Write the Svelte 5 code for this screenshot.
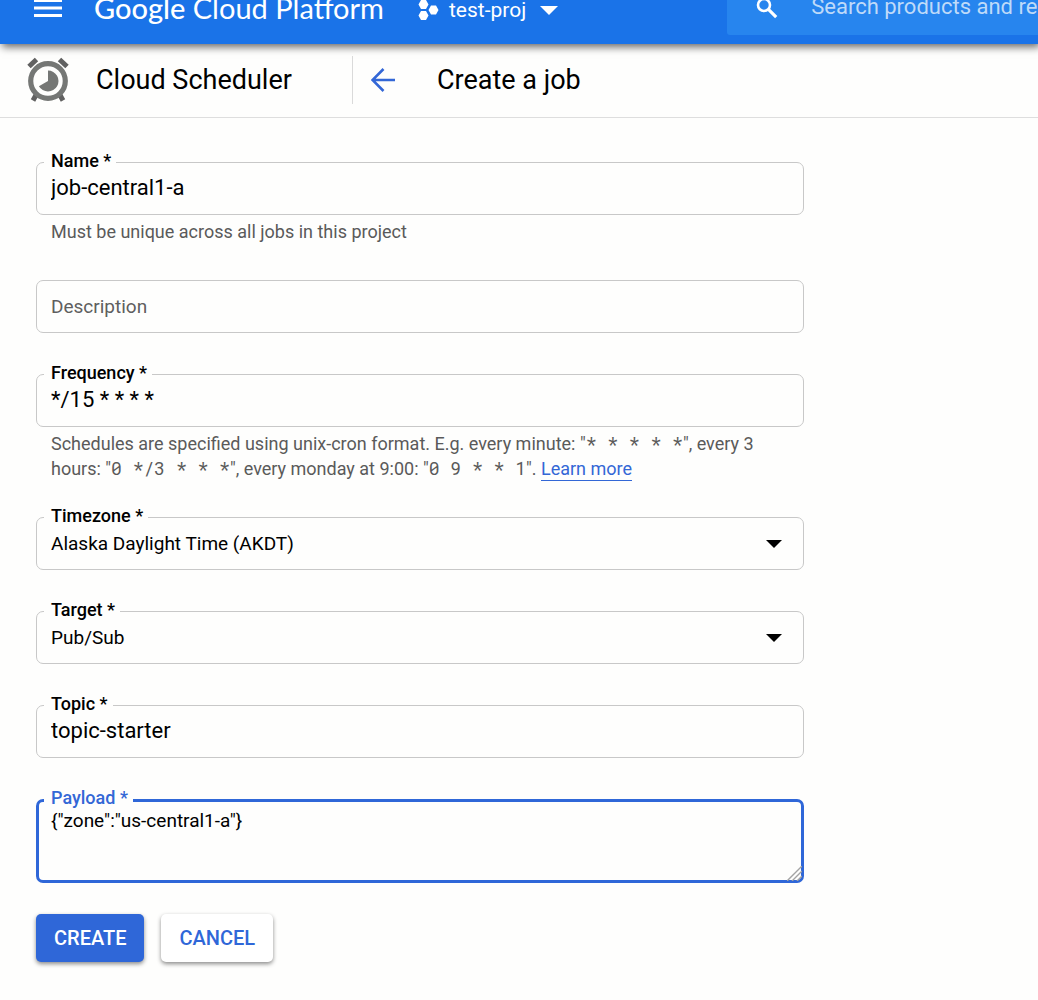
<script>
  let name = $state('job-central1-a');
  let description = $state('');
  let frequency = $state('*/15 * * * *');
  let timezone = $state('Alaska Daylight Time (AKDT)');
  let target = $state('Pub/Sub');
  let topic = $state('topic-starter');
  let payload = $state('{"zone":"us-central1-a"}');
</script>

<div class="page">
  <header class="topbar">
    <button class="icon-button menu" type="button" aria-label="Navigation menu">
      <svg width="28" height="18" viewBox="0 0 28 18" aria-hidden="true">
        <path d="M0 0h28v3H0zM0 7.500h28v3H0zM0 15h28v3H0z" fill="#fff" />
      </svg>
    </button>
    <a class="brand" href="#home"><span>Google</span> Cloud Platform</a>
    <button class="icon-button project" type="button">
      <svg width="21" height="22" viewBox="0 0 21 22" aria-hidden="true">
        <path
          d="M3 1h5l2.500 4.500L8 10H3L.5 5.500zM13 6.500h5l2.500 4.500-2.500 4.500h-5L10.500 11zM3 12h5l2.500 4.500L8 21H3L.5 16.500z"
          fill="#fff"
        />
      </svg>
      <span>test-proj</span>
      <svg class="caret" width="18" height="9" viewBox="0 0 18 9" aria-hidden="true">
        <path d="M0 0h18L9 9z" fill="#fff" />
      </svg>
    </button>
    <div class="search">
      <svg width="22" height="22" viewBox="0 0 22 22" aria-hidden="true">
        <circle cx="8" cy="8" r="6" fill="none" stroke="#fff" stroke-width="2.600" />
        <path d="M12.200 12.200l8 8" stroke="#fff" stroke-width="3.200" />
      </svg>
      <input type="text" placeholder="Search products and resources" aria-label="Search products and resources" />
    </div>
  </header>

  <div class="titlebar">
    <div class="product">
      <svg width="42" height="46" viewBox="0 0 42 46" aria-hidden="true">
        <g fill="none" stroke="#616161" stroke-width="5">
          <path d="M2 9.500l7.500-7M40 9.500l-7.500-7M9 38l-3 5.500M33 38l3 5.500" />
        </g>
        <circle cx="21" cy="24" r="17.300" fill="none" stroke="#757775" stroke-width="5.200" />
        <path d="M21 24V13.500a10.500 10.500 0 1 1-9.100 15.750z" fill="#757775" />
      </svg>
      <span>Cloud Scheduler</span>
    </div>
    <a class="back" href="#jobs" aria-label="Back to jobs">
      <svg width="24" height="24" viewBox="0 0 24 24" aria-hidden="true">
        <path d="M24 12H2M12.500 1L1.500 12l11 11" fill="none" stroke="#3367d6" stroke-width="2.600" />
      </svg>
    </a>
    <h1>Create a job</h1>
  </div>

  <form onsubmit={(e) => e.preventDefault()}>
    <div class="field">
      <label for="name">Name *</label>
      <input id="name" type="text" bind:value={name} />
    </div>
    <p class="help">Must be unique across all jobs in this project</p>

    <div class="field">
      <input id="description" type="text" placeholder="Description" aria-label="Description" bind:value={description} />
    </div>

    <div class="field">
      <label for="frequency">Frequency *</label>
      <input id="frequency" type="text" bind:value={frequency} />
    </div>
    <p class="help">
      Schedules are specified using unix-cron format. E.g. every minute: "<code>* * * * *</code>", every 3 hours:
      "<code>0 */3 * * *</code>", every monday at 9:00: "<code>0 9 * * 1</code>". <a href="#cron">Learn more</a>
    </p>

    <div class="field">
      <label for="timezone">Timezone *</label>
      <select id="timezone" bind:value={timezone}>
        <option>Alaska Daylight Time (AKDT)</option>
      </select>
      <svg class="arrow" width="16" height="8" viewBox="0 0 16 8" aria-hidden="true"><path d="M0 0h16L8 8z" /></svg>
    </div>

    <div class="field">
      <label for="target">Target *</label>
      <select id="target" bind:value={target}>
        <option>Pub/Sub</option>
      </select>
      <svg class="arrow" width="16" height="8" viewBox="0 0 16 8" aria-hidden="true"><path d="M0 0h16L8 8z" /></svg>
    </div>

    <div class="field">
      <label for="topic">Topic *</label>
      <input id="topic" type="text" bind:value={topic} />
    </div>

    <div class="field active">
      <label for="payload">Payload *</label>
      <textarea id="payload" rows="2" spellcheck="false" bind:value={payload}></textarea>
      <svg class="grip" width="15" height="15" viewBox="0 0 15 15" aria-hidden="true">
        <path d="M0 15L15 0M5 15L15 5M10 15l5-5" stroke="#a3a3a3" stroke-width="1.400" />
      </svg>
    </div>

    <div class="actions">
      <button class="primary" type="submit">CREATE</button>
      <button class="secondary" type="button">CANCEL</button>
    </div>
  </form>
</div>

<style>
  :global(body) {
    background: #fefefd;
  }

  .page {
    min-height: 100vh;
    overflow: hidden;
    font-family: Roboto, 'Liberation Sans', sans-serif;
    color: #000;
  }

  .topbar {
    position: relative;
    display: flex;
    align-items: center;
    height: 72px;
    margin-top: -28px;
    padding-left: 34px;
    background: #1a73e8;
    box-shadow: 2px 3px 8px rgba(0, 0, 0, 0.6);
    color: #fff;
    white-space: nowrap;
  }

  .icon-button {
    display: flex;
    align-items: center;
    flex: none;
    padding: 0;
    border: 0;
    background: none;
    color: #fff;
    font: 21px/28px Roboto, sans-serif;
    cursor: pointer;
  }

  .brand {
    flex: none;
    width: 324px;
    margin-left: 32px;
    color: #fff;
    font: 29px/36px Lato, sans-serif;
    text-decoration: none;
  }

  .brand span {
    font-weight: 500;
  }

  .project {
    gap: 10px;
    padding-top: 4px;
  }

  .caret {
    margin-left: 4px;
  }

  .search {
    display: flex;
    align-items: center;
    flex: 1;
    gap: 33px;
    min-width: 0;
    height: 54px;
    margin-left: 169px;
    padding-left: 29px;
    border-radius: 3px 0 0 3px;
    background: #2785ee;
  }

  .search svg {
    flex: none;
  }

  .search input {
    flex: 1;
    min-width: 0;
    padding: 0 0 2px;
    border: 0;
    outline: 0;
    background: none;
    color: #fff;
    font: 22px/30px Roboto, sans-serif;
  }

  .search input::placeholder {
    color: #bedaf9;
    opacity: 1;
  }

  .titlebar {
    display: flex;
    align-items: center;
    height: 72px;
    padding: 0 0 1px 27px;
    border-bottom: 1px solid #dedede;
    font-size: 27px;
    line-height: 36px;
  }

  .product {
    display: flex;
    align-items: center;
    gap: 27px;
    box-sizing: border-box;
    width: 326px;
    height: 48px;
    border-right: 1px solid #dadada;
  }

  .back {
    display: flex;
    margin: 0 42px 0 18px;
  }

  h1 {
    margin: 0;
    font-size: 27px;
    font-weight: 400;
  }

  form {
    max-width: 768px;
    padding: 44px 36px 38px;
  }

  .field {
    position: relative;
    margin-bottom: 41px;
  }

  .field label {
    position: absolute;
    top: -11px;
    left: 8px;
    padding: 0 5px 0 7px;
    background: #fefefd;
    font-size: 18px;
    font-weight: 500;
    line-height: 20px;
  }

  .field input,
  .field select,
  .field textarea {
    display: block;
    box-sizing: border-box;
    width: 100%;
    height: 53px;
    margin: 0;
    padding: 0 14px 2px;
    border: 1px solid #c8c8c8;
    border-radius: 7px;
    outline: 0;
    background: transparent;
    color: #000;
    font: 22px/28px Roboto, sans-serif;
  }

  .field #description {
    padding-bottom: 0;
    font-size: 19px;
  }

  .field input::placeholder {
    color: #5f5f5f;
    opacity: 1;
  }

  .field select {
    padding-bottom: 0;
    appearance: none;
    font-size: 19px;
  }

  .arrow {
    position: absolute;
    top: 23px;
    right: 22px;
    pointer-events: none;
  }

  .field.active {
    margin-bottom: 31px;
  }

  .active label {
    color: #3367d6;
  }

  .field textarea {
    height: 84px;
    padding: 5px 12px;
    border: 3px solid #2f67d8;
    font-size: 19px;
    resize: vertical;
  }

  textarea::-webkit-resizer {
    display: none;
  }

  .grip {
    position: absolute;
    right: 2px;
    bottom: 2px;
    pointer-events: none;
  }

  .help {
    margin: -37px 0 36px;
    padding: 0 15px;
    color: #5a5a5a;
    font-size: 18px;
    line-height: 25px;
  }

  .help code {
    font-family: 'Roboto Mono', 'Liberation Mono', monospace;
    font-size: 18px;
  }

  .help a {
    padding-bottom: 1px;
    border-bottom: 1px solid #3367d6;
    color: #3367d6;
    text-decoration: none;
  }

  .actions {
    display: flex;
    gap: 17px;
  }

  .actions button {
    height: 48px;
    padding: 0 18px;
    border: 0;
    border-radius: 5px;
    box-shadow: 0 2px 4px rgba(0, 0, 0, 0.45);
    font: 500 20px/28px Roboto, sans-serif;
    cursor: pointer;
  }

  .primary {
    background: #2f67d8;
    color: #fff;
  }

  .secondary {
    background: #fff;
    color: #2f67d8;
  }
</style>
